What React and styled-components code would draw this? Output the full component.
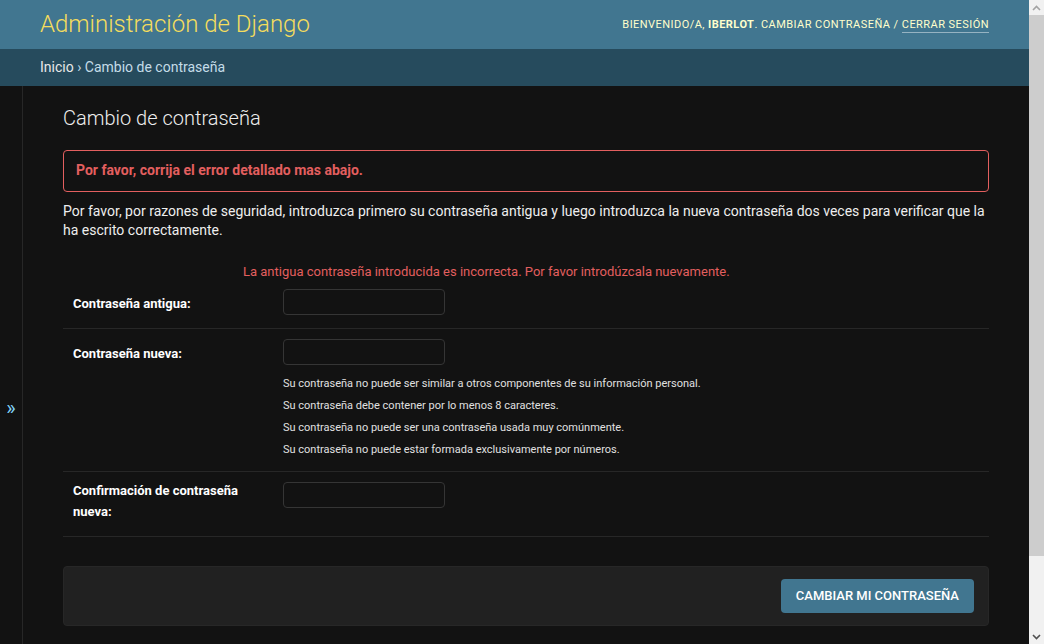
import React from 'react'
import styled, { createGlobalStyle } from 'styled-components'

// GLOBAL
const GlobalStyle = createGlobalStyle`
	html, body {
		margin: 0;
		padding: 0;
		background: #121212;
		overflow: hidden;
	}
	body {
		font-family: Roboto, "Liberation Sans", sans-serif;
		font-size: 14px;
		line-height: 1.4;
		color: #eeeeee;
	}
	* { box-sizing: border-box; }
`

// PAGE
const Page = styled.div`
	margin-right: 15px;
`

// browser scrollbar (the page is taller than the window)
const Scrollbar = styled.div`
	position: fixed;
	top: 0;
	right: 0;
	width: 15px;
	height: 100vh;
	display: flex;
	flex-direction: column;
	background: #f1f1f1;
`

const ScrollArrow = styled.div`
	flex: 0 0 15px;
	display: flex;
	align-items: center;
	justify-content: center;
	color: ${p => p.$disabled ? '#a3a3a3' : '#505050'};
`

const ScrollTrack = styled.div`
	flex: 1;
`

const ScrollThumb = styled.div`
	height: 541px;
	background: #cdcdcd;
`

// HEADER
const Header = styled.header`
	display: flex;
	justify-content: space-between;
	align-items: center;
	padding: 10px 40px;
	background: #417690;
	color: #ffffcc;
`

const SiteName = styled.h1`
	margin: 0;
	font-size: 24px;
	line-height: 29px;
	font-weight: 300;
	color: #f5dd5d;
`

const UserTools = styled.div`
	font-size: 11px;
	line-height: 14px;
	letter-spacing: 0.45px;
	text-transform: uppercase;
	color: #ffffcc;
	strong { font-weight: 700; }
`

const LogoutButton = styled.span`
	border-bottom: 1px solid rgba(255, 255, 255, 0.45);
	padding-bottom: 1px;
`

const Breadcrumbs = styled.div`
	padding: 10px 40px;
	background: #264b5d;
	color: #c4dce8;
	line-height: 17px;
	span { color: #e8e8e8; }
`

// MAIN
const Main = styled.div`
	display: flex;
	min-height: 645px;
`

const NavToggle = styled.div`
	flex: 0 0 23px;
	display: flex;
	align-items: center;
	justify-content: center;
	border-right: 1px solid #272727;
	font-size: 20px;
	color: #81d4fa;
	padding-bottom: 2px;
`

const Content = styled.div`
	flex: 1;
	padding: 20px 40px;
`

const Title = styled.h1`
	margin: 0 0 20px;
	font-size: 20px;
	line-height: 24px;
	font-weight: 300;
`

const ErrorNote = styled.p`
	margin: 0 0 10px;
	padding: 10px 12px;
	border: 1px solid #e35f5f;
	border-radius: 4px;
	color: #e35f5f;
	font-weight: 700;
`

const Intro = styled.p`
	margin: 0 0 12px;
`

const Fieldset = styled.fieldset`
	margin: 0 0 29px;
	padding: 0;
	border: none;
`

const Row = styled.div`
	padding: 10px;
	border-bottom: 1px solid #272727;
`

const ErrorList = styled.ul`
	margin: 0 0 8px 170px;
	padding: 0;
	list-style: none;
	li {
		font-size: 13px;
		line-height: 18px;
		color: #e35f5f;
	}
`

const Field = styled.div`
	display: flex;
	align-items: flex-start;
`

const Label = styled.label`
	flex: 0 0 210px;
	padding: ${p => p.$multi ? '0' : '3px'} 10px 0 0;
	font-size: 13px;
	font-weight: 700;
	line-height: 18px;
	color: #ffffff;
	&::after {
		content: '';
		display: inline-block;
		vertical-align: middle;
		height: 26px;
	}
`

const Control = styled.div`
	display: flex;
	flex-direction: column;
`

const Input = styled.input`
	width: 162px;
	height: 26px;
	padding: 2px 5px;
	background: #121212;
	border: 1px solid #353535;
	border-radius: 4px;
	color: #eeeeee;
	font: inherit;
`

const Help = styled.ul`
	margin: 8px 0 0;
	padding: 0;
	list-style: none;
	li {
		font-size: 11px;
		line-height: 16px;
		padding: 3px 0;
		color: #e0e0e0;
	}
`

const SubmitRow = styled.div`
	display: flex;
	justify-content: flex-end;
	padding: 12px 14px;
	margin: 0 0 20px;
	background: #212121;
	border: 1px solid #272727;
	border-radius: 4px;
`

const SubmitButton = styled.button`
	padding: 10px 15px;
	border: none;
	border-radius: 4px;
	background: #417690;
	color: #ffffff;
	font-family: Roboto, "Liberation Sans", sans-serif;
	font-size: 13px;
	line-height: 14px;
	font-weight: 500;
	text-transform: uppercase;
`

const helpTexts = [
	'Su contraseña no puede ser similar a otros componentes de su información personal.',
	'Su contraseña debe contener por lo menos 8 caracteres.',
	'Su contraseña no puede ser una contraseña usada muy comúnmente.',
	'Su contraseña no puede estar formada exclusivamente por números.',
]

const Chevron = ({ up }) => (
	<svg width='9' height='6' viewBox='0 0 9 6'>
		<path
			d={up ? 'M1 5 L4.5 1.5 L8 5' : 'M1 1 L4.5 4.5 L8 1'}
			fill='none'
			stroke='currentColor'
			strokeWidth='1.6'
		/>
	</svg>
)

const App = () => (
	<>
		<GlobalStyle />
		<Page>
			<Header>
				<SiteName>Administración de Django</SiteName>
				<UserTools>
					Bienvenido/a, <strong>iberlot</strong>. Cambiar contraseña / <LogoutButton>Cerrar sesión</LogoutButton>
				</UserTools>
			</Header>
			<Breadcrumbs>
				<span>Inicio</span> › Cambio de contraseña
			</Breadcrumbs>
			<Main>
				<NavToggle>»</NavToggle>
				<Content>
					<Title>Cambio de contraseña</Title>
					<ErrorNote>Por favor, corrija el error detallado mas abajo.</ErrorNote>
					<Intro>
						Por favor, por razones de seguridad, introduzca primero su contraseña antigua y luego introduzca la nueva contraseña dos veces para verificar que la ha escrito correctamente.
					</Intro>
					<Fieldset>
						<Row>
							<ErrorList>
								<li>La antigua contraseña introducida es incorrecta. Por favor introdúzcala nuevamente.</li>
							</ErrorList>
							<Field>
								<Label>Contraseña antigua:</Label>
								<Input type='password' />
							</Field>
						</Row>
						<Row>
							<Field>
								<Label>Contraseña nueva:</Label>
								<Control>
									<Input type='password' />
									<Help>
										{helpTexts.map(text => <li key={text}>{text}</li>)}
									</Help>
								</Control>
							</Field>
						</Row>
						<Row>
							<Field>
								<Label $multi>Confirmación de contraseña nueva:</Label>
								<Input type='password' />
							</Field>
						</Row>
					</Fieldset>
					<SubmitRow>
						<SubmitButton>Cambiar mi contraseña</SubmitButton>
					</SubmitRow>
				</Content>
			</Main>
		</Page>
		<Scrollbar>
			<ScrollArrow $disabled><Chevron up /></ScrollArrow>
			<ScrollTrack><ScrollThumb /></ScrollTrack>
			<ScrollArrow><Chevron /></ScrollArrow>
		</Scrollbar>
	</>
)

export default App
